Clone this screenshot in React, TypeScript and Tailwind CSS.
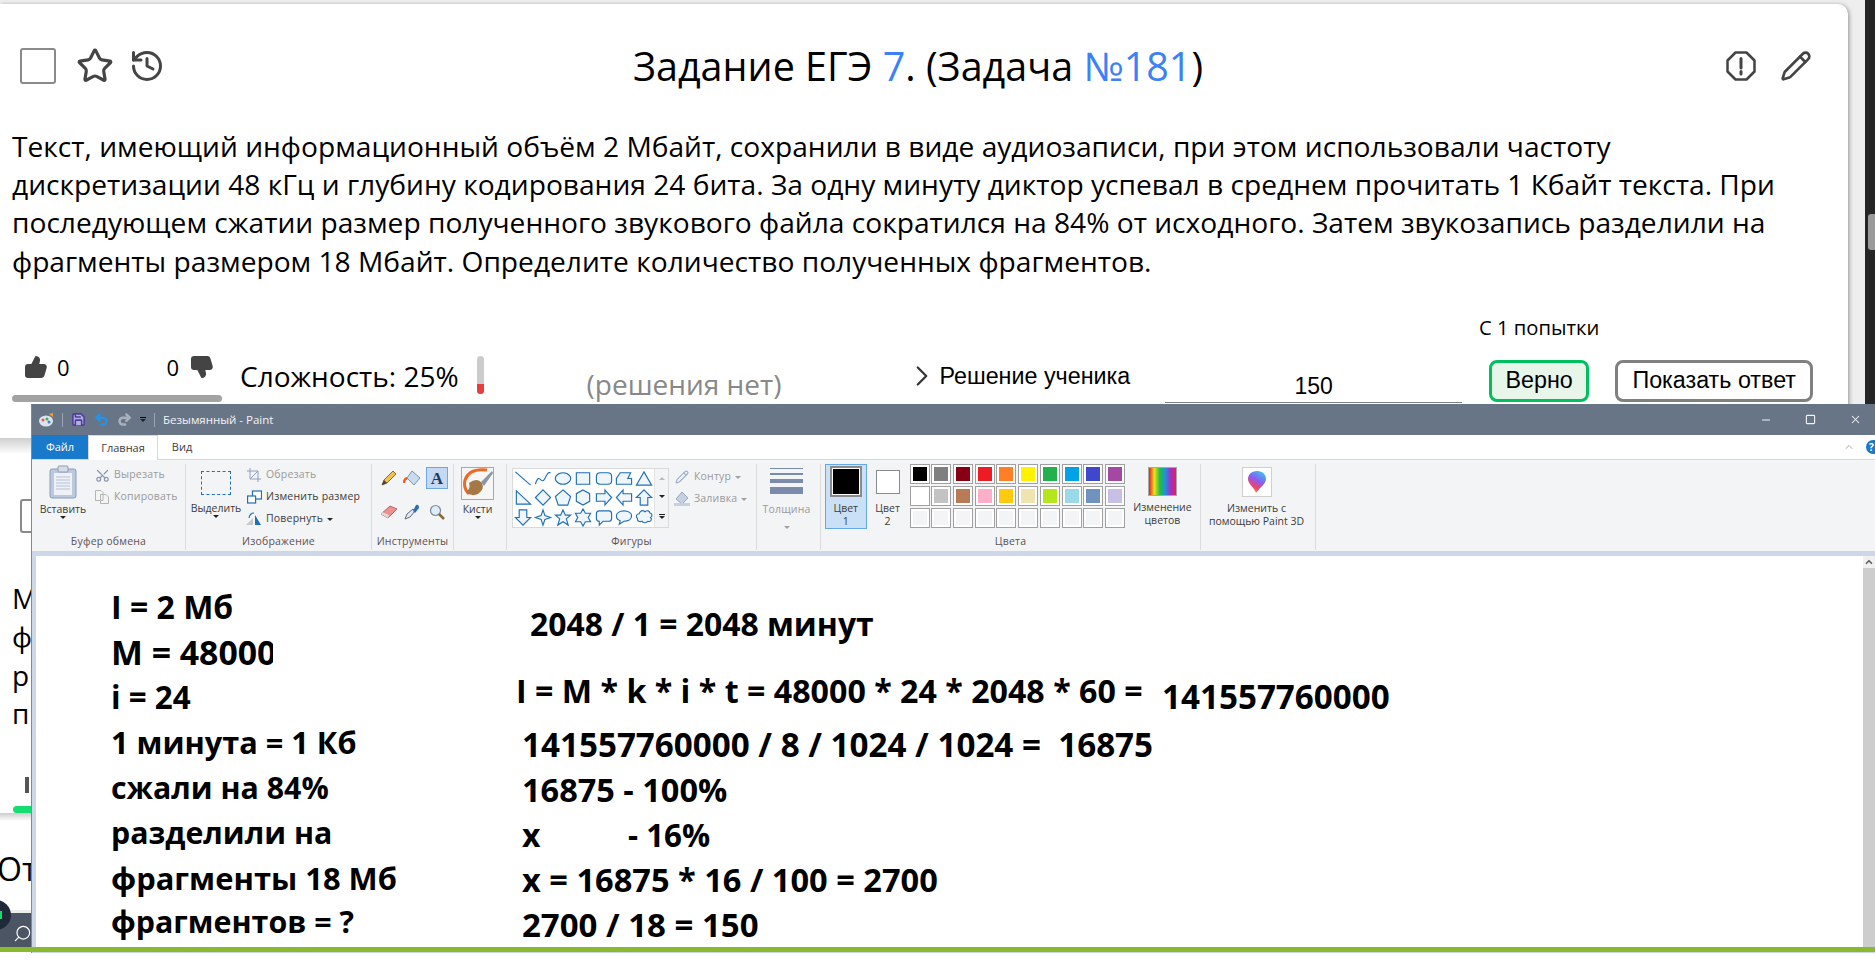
import { Scissors, Star, History, Pencil, ThumbsUp, ThumbsDown, ChevronRight, ChevronUp, Minus, Square, X, Search, Save, Undo2, Redo2 } from 'lucide-react'

const palette = [
  ['#000000', '#7f7f7f', '#880015', '#ed1c24', '#ff7f27', '#fff200', '#22b14c', '#00a2e8', '#3f48cc', '#a349a4'],
  ['#ffffff', '#c3c3c3', '#b97a57', '#ffaec9', '#ffc90e', '#efe4b0', '#b5e61d', '#99d9ea', '#7092be', '#c8bfe7'],
  ['', '', '', '', '', '', '', '', '', ''],
]

const shapes = [
  'M2 3L18 17',
  'M2 16C6 2 8 18 12 10S16 4 18 4',
  'M10 4a8 6 0 1 0 .01 0Z',
  'M3 4H17V16H3Z',
  'M6 4H14Q18 4 18 8V12Q18 16 14 16H6Q2 16 2 12V8Q2 4 6 4Z',
  'M6 4H17L14 10H18V16H2V10Z',
  'M10 3L18 17H2Z',
  'M3 3L18 17H3Z',
  'M10 2L18 10L10 18L2 10Z',
  'M10 2L18 9L15 18H5L2 9Z',
  'M10 2L17 6V14L10 18L3 14V6Z',
  'M2 6H11V2L18 10L11 18V14H2Z',
  'M18 6H9V2L2 10L9 18V14H18Z',
  'M10 2L18 10H14V18H6V10H2Z',
  'M6 2H14V10H18L10 18L2 10H6Z',
  'M10 2L12 8L18 10L12 12L10 18L8 12L2 10L8 8Z',
  'M10 2L12.5 7.5H18L13.5 11.5L15.5 18L10 14.5L4.5 18L6.500 11.5L2 7.5H7.5Z',
  'M10 1L12.500 5.500H18L15.500 10L18 14.500H12.500L10 19L7.500 14.500H2L4.500 10L2 5.500H7.500Z',
  'M5 3H15Q18 3 18 6V11Q18 14 15 14H9L5 18V14Q2 14 2 11V6Q2 3 5 3Z',
  'M10 3C15 3 18 5.500 18 8.500S15 14 10 14L5 17L6 13.500C3.500 12.500 2 10.500 2 8.500C2 5.500 5 3 10 3Z',
  'M6 4C8 2 10 3 11 4C13 2 16 3 16 5C19 6 19 9 17 10C19 12 17 15 14 14C12 16 9 16 8 14C5 15 3 14 3 11C1 9 2 6 5 6C5 5 5.500 4.500 6 4Z',
]

const leftLines = [
  { text: 'I = 2 Мб', top: 587, size: 'text-[32px]' },
  { text: 'M = 48000', top: 632, size: 'text-[33.800px]', clip: true },
  { text: 'i = 24', top: 677, size: 'text-[31.400px]' },
  { text: '1 минута = 1 Кб', top: 722, size: 'text-[30.700px]' },
  { text: 'сжали на 84%', top: 768, size: 'text-[30.300px]' },
  { text: 'разделили на', top: 813, size: 'text-[30.300px]' },
  { text: 'фрагменты 18 Мб', top: 858, size: 'text-[30.900px]' },
  { text: 'фрагментов = ?', top: 902, size: 'text-[30.400px]' },
]

const rightLines = [
  { text: '2048 / 1 = 2048 минут', left: 530, top: 604, size: 'text-[31.900px]' },
  { text: 'I = M * k * i * t = 48000 * 24 * 2048 * 60 =', left: 516, top: 671, size: 'text-[32.200px]' },
  { text: '141557760000', left: 1162, top: 677, size: 'text-[33.200px]' },
  { text: '141557760000 / 8 / 1024 / 1024 =  16875', left: 522, top: 725, size: 'text-[33.200px]' },
  { text: '16875 - 100%', left: 522, top: 770, size: 'text-[32.500px]' },
  { text: 'x', left: 522, top: 815, size: 'text-[32px]' },
  { text: '- 16%', left: 628, top: 815, size: 'text-[31.300px]' },
  { text: 'x = 16875 * 16 / 100 = 2700', left: 522, top: 860, size: 'text-[32.600px]' },
  { text: '2700 / 18 = 150', left: 522, top: 905, size: 'text-[33px]' },
]

function Caret({ gray }: { gray?: boolean }) {
  return <span className={`inline-block h-0 w-0 border-x-[3px] border-t-[3px] border-x-transparent ${gray ? 'border-t-[#a0a0a0]' : 'border-t-[#222]'}`} />
}

function Group({ width, label, children }: { width: string; label: string; children: React.ReactNode }) {
  return (
    <div className={`flex h-[86px] flex-col border-r border-[#dcdcdc] ${width}`}>
      <div className="flex h-[70px] shrink-0">{children}</div>
      <div className="text-center text-[10.500px] leading-[14px] tracking-[0.2px] text-[#5d5257]">{label}</div>
    </div>
  )
}

function SmallAction({ icon, label, dim, caret }: { icon: React.ReactNode; label: string; dim?: boolean; caret?: boolean }) {
  return (
    <div className={`flex h-[22px] items-center gap-[4px] text-[10.500px] tracking-[0.2px] ${dim ? 'text-[#9a9a9a]' : 'text-[#3c3c3c]'}`}>
      <span className="flex w-[16px] justify-center">{icon}</span>
      <span>{label}</span>
      {caret && <Caret gray={dim} />}
    </div>
  )
}

function PaintRibbon() {
  return (
    <div className="flex h-[92px] items-start border-t border-[#d9d9d9] bg-[#f3f4f6] pt-[4px] font-['Open_Sans',sans-serif]">
      <Group width="w-[154px]" label="Буфер обмена">
        <div className="flex w-[62px] flex-col items-center text-[10.500px] text-[#3c3c3c]">
          <svg width="30" height="34" viewBox="0 0 30 34" className="mt-[1px]">
            <rect x="2" y="4" width="26" height="29" rx="2" fill="#bcc8dc" stroke="#8d9cb6" />
            <rect x="6" y="8" width="18" height="22" fill="#eef2f8" />
            <path d="M8 12H22M8 15H22M8 18H22M8 21H22M8 24H22" stroke="#b4c0d4" />
            <rect x="10" y="1" width="10" height="6" rx="1" fill="#d8dce4" stroke="#8d9cb6" />
          </svg>
          <span className="mt-[3px] leading-[14px]">Вставить</span>
          <Caret />
        </div>
        <div className="flex flex-col">
          <SmallAction dim label="Вырезать" icon={<Scissors size={15} className="-rotate-90 text-[#8b97ad]" />} />
          <SmallAction
            dim
            label="Копировать"
            icon={
              <svg width="16" height="16" viewBox="0 0 16 16" fill="#f4f4f4" stroke="#b5b5b5">
                <path d="M1.500 1.500H7L9 3.500V11.500H1.500ZM6.500 5.500H12L14.500 8V14.500H6.500Z" />
              </svg>
            }
          />
        </div>
      </Group>
      <Group width="w-[186px]" label="Изображение">
        <div className="flex w-[60px] flex-col items-center text-[10.500px] text-[#3c3c3c]">
          <div className="mt-[7px] h-[24px] w-[30px] border border-dashed border-[#1f6fb5]" />
          <span className="mt-[6px] leading-[14px]">Выделить</span>
          <Caret />
        </div>
        <div className="flex flex-col">
          <SmallAction
            dim
            label="Обрезать"
            icon={
              <svg width="14" height="14" viewBox="0 0 14 14" fill="none" stroke="#8fa0b8">
                <path d="M3 0V11H14M0 3H11V14M3 11L11 3" />
              </svg>
            }
          />
          <SmallAction
            label="Изменить размер"
            icon={
              <svg width="15" height="14" viewBox="0 0 15 14" fill="#fff" stroke="#1f6fb5" strokeWidth="1.200">
                <rect x="5.500" y="1" width="9" height="8" />
                <rect x="0.600" y="6" width="8" height="7" />
              </svg>
            }
          />
          <SmallAction
            caret
            label="Повернуть"
            icon={
              <svg width="16" height="14" viewBox="0 0 16 14">
                <path d="M0 13L7 6V13Z" fill="#c8c8c8" />
                <path d="M9 3L15 13H9Z" fill="#1f6fb5" />
                <path d="M3 6Q4 1 8 1" fill="none" stroke="#1f6fb5" strokeWidth="1.200" />
              </svg>
            }
          />
        </div>
      </Group>
      <Group width="w-[82px]" label="Инструменты">
        <div className="grid grid-cols-3 grid-rows-2 px-[6px] pt-[3px]">
          <span className="flex h-[22px] w-[22px] items-center justify-center">
            <svg width="16" height="16" viewBox="0 0 16 16">
              <path d="M1 15L3 10L12 1L15 4L6 13Z" fill="#f2c14e" stroke="#8b6a2a" />
              <path d="M1 15L3 10L6 13Z" fill="#444" />
            </svg>
          </span>
          <span className="flex h-[22px] w-[22px] items-center justify-center">
            <svg width="18" height="16" viewBox="0 0 18 16">
              <path d="M9 1L17 8L11 15L4 8Z" fill="#c8dcf0" stroke="#7b94b4" />
              <path d="M4 8Q1 9 1 13" fill="none" stroke="#e8622a" strokeWidth="2.500" />
            </svg>
          </span>
          <span className="ml-[2px] flex h-[22px] w-[22px] items-center justify-center border border-[#6fa8dc] bg-[#c5daf2] font-['Liberation_Serif',serif] text-[17px] font-bold leading-none text-[#1d3a66]">A</span>
          <span className="flex h-[22px] w-[22px] items-center justify-center">
            <svg width="18" height="14" viewBox="0 0 18 14">
              <path d="M1 9L10 1L17 4L8 13Z" fill="#ee8f8f" stroke="#b86a6a" />
              <path d="M1 9L8 13L9 10L2 7Z" fill="#ddd" />
            </svg>
          </span>
          <span className="flex h-[22px] w-[22px] items-center justify-center">
            <svg width="16" height="16" viewBox="0 0 16 16">
              <path d="M1 15L3 10L9 5L11 7L6 13Z" fill="#e6ecf4" stroke="#667" />
              <path d="M9 7L12 1Q15 0 15 4L11 9Z" fill="#2a6fb5" />
            </svg>
          </span>
          <span className="ml-[2px] flex h-[22px] w-[22px] items-center justify-center">
            <svg width="16" height="16" viewBox="0 0 16 16">
              <circle cx="6.500" cy="6.500" r="5" fill="#dcecf8" stroke="#7d8a99" strokeWidth="1.200" />
              <path d="M10 10L15 15" stroke="#8a6a3a" strokeWidth="2.500" />
            </svg>
          </span>
        </div>
      </Group>
      <Group width="w-[53px]" label="">
        <div className="flex w-full flex-col items-center pr-[5px] text-[10.500px] text-[#3c3c3c]">
          <svg width="33" height="33" viewBox="0 0 33 33" className="mt-[3px]">
            <rect x="0.500" y="0.500" width="32" height="32" fill="#f6f6f6" stroke="#a8a8a8" />
            <path d="M26 3Q8 1 4 13Q2 21 8 27" fill="none" stroke="#ea6b24" strokeWidth="3" />
            <path d="M8 16Q16 10 21 16Q24 22 17 27Q10 30 5 25Q10 22 8 16Z" fill="#a57846" />
            <path d="M20 15L31 4L32 6L23 19Z" fill="#8b95a5" />
          </svg>
          <span className="mt-[2px] leading-[14px]">Кисти</span>
          <Caret />
        </div>
      </Group>
      <Group width="w-[250px]" label="Фигуры">
        <div className="ml-[5px] mt-[4px] flex h-[60px] w-[157px] border border-[#dadada] bg-white">
          <div className="grid h-[58px] w-[142px] grid-cols-7 bg-white">
            {shapes.map((d, i) => (
              <svg key={i} width="20" height="19" viewBox="0 0 20 20" stroke="#1f6fb5" strokeWidth="1.200">
                <path d={d} fill={i < 2 ? 'none' : '#eef6fc'} />
              </svg>
            ))}
          </div>
          <div className="flex w-[14px] flex-col items-center justify-around border-l border-[#e4e4e4] bg-[#f3f4f6]">
            <span className="h-0 w-0 border-x-[3px] border-b-[3px] border-x-transparent border-b-[#bbb]" />
            <Caret />
            <span className="flex flex-col items-center gap-[1px]">
              <span className="h-px w-[6px] bg-[#222]" />
              <Caret />
            </span>
          </div>
        </div>
        <div className="ml-[5px] flex flex-col pt-[2px]">
          <SmallAction dim caret label="Контур" icon={<Pencil size={14} className="text-[#9fb0c8]" />} />
          <SmallAction
            dim
            caret
            label="Заливка"
            icon={
              <svg width="16" height="16" viewBox="0 0 16 16">
                <path d="M8 1L14 7L8 13L2 8Z" fill="#c5d0e0" stroke="#9aa8bc" />
                <rect x="0" y="12" width="16" height="3" fill="#c5d0e0" />
              </svg>
            }
          />
        </div>
      </Group>
      <Group width="w-[64px]" label="">
        <div className="flex w-full flex-col items-center pr-[4px] text-[10.500px] text-[#9a9a9a]">
          <div className="mt-[4px] flex w-[33px] flex-col">
            <span className="h-px bg-[#7b8cab]" />
            <span className="mt-[4px] h-[2px] bg-[#7b8cab]" />
            <span className="mt-[4px] h-[4px] bg-[#7b8cab]" />
            <span className="mt-[4px] h-[7px] bg-[#7b8cab]" />
          </div>
          <span className="mt-[8px] leading-[14px] tracking-[0.2px]">Толщина</span>
          <span className="mt-[2px]"><Caret gray /></span>
        </div>
      </Group>
      <Group width="w-[380px]" label="Цвета">
        <div className="ml-[4px] flex h-[65px] w-[42px] flex-col items-center border border-[#66a7e8] bg-[#c9e0f7] pt-[1px] text-[10.500px] leading-[13px] text-[#3c3c3c]">
          <span className="mb-[5px] h-[32px] w-[32px] border-2 border-[#8a8a8a] bg-black outline-1 -outline-offset-3 outline-white" />
          <span className="text-center">Цвет<br />1</span>
        </div>
        <div className="ml-[9px] flex w-[24px] flex-col items-center pt-[6px] text-[10.500px] leading-[13px] text-[#3c3c3c]">
          <span className="mb-[8px] h-[24px] w-[24px] border border-[#8a8a8a] bg-white" />
          <span className="text-center">Цвет<br />2</span>
        </div>
        <div className="ml-[10px] grid h-fit grid-cols-10 gap-[2px]">
          {palette.flat().map((c, i) => (
            <span key={i} className="h-[20px] w-[20px] border border-[#a0a0a0] bg-white p-[2px]">
              <span className="block h-full w-full" style={{ background: c || '#f3f4f6' }} />
            </span>
          ))}
        </div>
        <div className="flex w-[76px] flex-col items-center text-center text-[10.500px] leading-[13px] text-[#3c3c3c]">
          <span className="mb-[5px] mt-[3px] h-[29px] w-[29px] border border-[#a8a8a8] bg-[linear-gradient(90deg,#e02020,#f0e020,#20c040,#2090e0,#a030c0,#e02060)]" />
          Изменение цветов
        </div>
      </Group>
      <Group width="w-[115px]" label="">
        <div className="flex w-full flex-col items-center pr-[3px] text-center text-[10.500px] leading-[13px] text-[#3c3c3c]">
          <span className="mb-[5px] mt-[3px] flex h-[30px] w-[30px] items-center justify-center border border-[#d0d0d0] bg-white">
            <svg width="20" height="24" viewBox="0 0 20 24">
              <defs>
                <linearGradient id="p3d" x1="0.800" y1="0" x2="0.300" y2="1">
                  <stop offset="0" stopColor="#35c8f0" />
                  <stop offset="0.450" stopColor="#8a5cf0" />
                  <stop offset="0.750" stopColor="#f04070" />
                  <stop offset="1" stopColor="#f5a030" />
                </linearGradient>
              </defs>
              <path d="M10 1C16 1 19 5 19 9C19 14 13 17 9 23C7 17 1 14 1 9C1 5 4 1 10 1Z" fill="url(#p3d)" />
            </svg>
          </span>
          <span>Изменить с<br />помощью Paint 3D</span>
        </div>
      </Group>
    </div>
  )
}

function PaintWindow() {
  return (
    <div className="absolute left-[31px] top-[404px] h-[549px] w-[1844px] border-l border-[#7a8aa0] bg-[#cdd7e7]">
      <div className="flex h-[31px] items-center justify-between bg-[#687587] pl-[7px] pr-[13px] font-['Open_Sans',sans-serif] text-[11.500px] text-white">
        <div className="flex items-center gap-[8px]">
          <svg width="15" height="14" viewBox="0 0 15 14">
            <ellipse cx="7" cy="8" rx="7" ry="5.500" fill="#dbe4ee" />
            <circle cx="4" cy="7" r="1.500" fill="#e85a4f" />
            <circle cx="8" cy="6" r="1.500" fill="#4fa85a" />
            <circle cx="10" cy="9" r="1.500" fill="#3b7fd4" />
            <path d="M10 1L14 0V4Z" fill="#e8a23a" />
          </svg>
          <span className="h-[14px] w-px bg-[#9aa5b4]" />
          <Save size={15} strokeWidth={2.500} className="text-[#4c3f98]" fill="#b7aee0" />
          <Undo2 size={15} strokeWidth={4} className="text-[#2a90e0]" />
          <Redo2 size={15} strokeWidth={4} className="text-[#a8b0bb]" />
          <span className="flex flex-col items-center gap-[1px]">
            <span className="h-px w-[6px] bg-black" />
            <Caret />
          </span>
          <span className="h-[14px] w-px bg-[#9aa5b4]" />
          <span className="text-[#f2f4f6]">Безымянный - Paint</span>
        </div>
        <div className="flex items-center gap-[33px] text-[#f2f4f6]">
          <Minus size={12} strokeWidth={2} />
          <Square size={11} strokeWidth={2.400} />
          <X size={13} strokeWidth={1.900} />
        </div>
      </div>
      <div className="flex h-[24px] items-stretch bg-white font-['Open_Sans',sans-serif] text-[11px] leading-[24px] text-[#3c3c3c]">
        <div className="w-[56px] bg-[#1979ca] text-center text-white">Файл</div>
        <div className="h-[25px] w-[70px] border-x border-t border-[#d9d9d9] bg-white text-center">Главная</div>
        <div className="w-[48px] text-center">Вид</div>
        <div className="flex flex-1 items-center justify-end">
          <ChevronUp size={12} className="mr-[11px] text-[#a8a8a8]" />
          <span className="flex h-[14px] w-[9px] items-center overflow-hidden rounded-l-full bg-[#1979ca] pl-[3px] text-[10px] font-bold text-white">?</span>
        </div>
      </div>
      <PaintRibbon />
      <div className="ml-[4px] mt-[5px] flex h-[392px] font-['Open_Sans',sans-serif] font-bold leading-[40px] text-black">
        <div className="relative w-[1827px] bg-white">
          {leftLines.map((line) => (
            <div
              key={line.text}
              className={`absolute left-[75px] whitespace-pre ${line.size} ${line.clip ? 'w-[162px] overflow-hidden' : ''}`}
              style={{ top: line.top - 556 }}
            >
              {line.text}
            </div>
          ))}
          {rightLines.map((line) => (
            <div key={line.text} className={`absolute whitespace-pre ${line.size}`} style={{ left: line.left - 36, top: line.top - 556 }}>
              {line.text}
            </div>
          ))}
        </div>
        <div className="flex w-[12px] flex-col bg-[#cdcdcd]">
          <div className="flex h-[12px] items-center justify-center bg-[#f0f0f0]">
            <ChevronUp size={10} strokeWidth={4} className="text-[#606060]" />
          </div>
        </div>
      </div>
    </div>
  )
}

export default function App() {
  return (
    <div className="relative h-[980px] w-[1875px] overflow-hidden bg-white font-['Open_Sans',sans-serif] text-black">
      <div className="h-[948px] bg-[#eeeeee] pt-[4px]">
        <div className="h-[434px] w-[1848px] rounded-tr-[10px] bg-white pl-[12px] pr-[30px] pt-[40px] shadow-[1px_1px_4px_rgba(0,0,0,0.4)]">
          <div className="mr-[6px] flex h-[44px] items-center">
            <div className="ml-[8px] flex items-center">
              <span className="h-[36px] w-[36px] rounded-[3px] border-2 border-[#8a8a8a] bg-white" />
              <Star size={38} strokeWidth={2} className="ml-[20px] text-[#444]" />
              <History size={36} strokeWidth={2} className="ml-[15px] text-[#444]" />
            </div>
            <h1 className="flex-1 whitespace-nowrap pr-[52px] text-center text-[39.500px] font-normal leading-[44px]">
              Задание ЕГЭ <span className="text-[#3b82f6]">7</span>. (Задача <span className="text-[#3b82f6]">№181</span>)
            </h1>
            <div className="flex items-center gap-[23px] text-[#444]">
              <svg width="32" height="32" viewBox="0 0 32 32" fill="none" stroke="currentColor" strokeWidth="2.500" className="ml-[2px]">
                <path d="M10.500 2.500H21.500L29.500 10.500V21.500L21.500 29.500H10.500L2.500 21.500V10.500Z" strokeLinejoin="round" />
                <path d="M16 8.500V18M16 21.500V24" strokeLinecap="round" strokeWidth="3" />
              </svg>
              <Pencil size={32} strokeWidth={2} />
            </div>
          </div>
          <p className="mt-[39px] w-[1790px] text-[28.150px] leading-[38.200px]">
            Текст, имеющий информационный объём 2 Мбайт, сохранили в виде аудиозаписи, при этом использовали частоту дискретизации 48 кГц и глубину кодирования 24 бита. За одну минуту диктор успевал в среднем прочитать 1 Кбайт текста. При последующем сжатии размер полученного звукового файла сократился на 84% от исходного. Затем звукозапись разделили на фрагменты размером 18 Мбайт. Определите количество полученных фрагментов.
          </p>
          <div className="mt-[48px] flex h-[95px] items-start whitespace-nowrap">
            <div className="mt-[24px] h-[50px] w-[210px] shrink-0">
              <div className="flex items-center justify-between pl-[12px] pr-[8px] text-[22px] leading-[30px]">
                <span className="flex items-center gap-[9px]">
                  <ThumbsUp size={24} className="text-[#444]" fill="#444" />0
                </span>
                <span className="flex items-center gap-[11px]">
                  0<ThumbsDown size={24} className="-scale-x-100 text-[#444]" fill="#444" />
                </span>
              </div>
              <div className="mt-[13px] h-[7px] rounded-full bg-[#a3a3a3]" />
            </div>
            <div className="ml-[18px] mt-[29px] flex shrink-0 items-center">
              <span className="text-[28px] leading-[38px]">Сложность: 25%</span>
              <span className="relative ml-[18px] -mt-[2px] h-[38px] w-[7px] overflow-hidden rounded-full bg-[#cccccc]">
                <span className="absolute bottom-0 left-0 h-[10px] w-full bg-[#e53e3e]" />
              </span>
            </div>
            <span className="ml-[103px] mt-[37px] shrink-0 text-[28px] leading-[38px] text-[#888888]">(решения нет)</span>
            <div className="ml-[124px] mt-[31px] flex shrink-0 items-center font-['Liberation_Sans',sans-serif] text-[23.300px] leading-[30px]">
              <ChevronRight size={34} strokeWidth={1.600} className="text-[#333]" />
              Решение ученика
            </div>
            <div className="ml-[35px] mt-[39px] h-[36px] w-[297px] shrink-0 border-b border-[#808080] text-center font-['Liberation_Sans',sans-serif] text-[23px] leading-[38px]">150</div>
            <div className="ml-[27px] -mt-[14px] flex shrink-0 flex-col">
              <span className="flex w-[100px] justify-center whitespace-nowrap text-[20.200px] leading-[26px]">С 1 попытки</span>
              <div className="mt-[20px] flex gap-[26px] font-['Liberation_Sans',sans-serif] text-[23.300px]">
                <button className="h-[42px] w-[100px] rounded-[8px] border-[3px] border-[#00bf5f] bg-[#e8f5e9]">Верно</button>
                <button className="h-[42px] w-[198px] rounded-[8px] border-[3px] border-[#808080] bg-white">Показать ответ</button>
              </div>
            </div>
          </div>
        </div>
        <div className="h-[472px] w-[31px] overflow-hidden bg-white">
          <div className="h-[16px] bg-gradient-to-b from-[#cfcfcf] to-white" />
          <span className="ml-[20px] mt-[45px] block h-[34px] w-[20px] rounded-[3px] border-2 border-[#8a8a8a]" />
          <div className="mt-[46px] pl-[12px] text-[28px] leading-[38.300px]">
            <p>М</p>
            <p>ф</p>
            <p>р</p>
            <p>п</p>
          </div>
          <div className="ml-[25px] mt-[45px] h-[16px] w-[4px] bg-[#555]" />
          <div className="ml-[13px] mt-[13px] h-[7px] rounded-l-full bg-[#14dc70]" />
          <div className="h-[8px] bg-gradient-to-b from-[#cccccc] to-white" />
        </div>
      </div>
      <div className="absolute left-0 top-[849px] w-[31px] overflow-hidden text-[32px] leading-[40px]">
        <span className="-ml-[3px] block">От</span>
      </div>
      <div className="absolute left-0 top-[913px] flex h-[35px] w-[31px] items-center justify-end overflow-hidden bg-[#4b5563] text-white">
        <Search size={19} strokeWidth={1.500} className="-mr-[1px] mt-[5px] -scale-x-100" />
      </div>
      <div className="absolute -left-[19px] top-[900px] flex h-[30px] w-[30px] items-center justify-end rounded-full bg-[#1f2937] pr-[9px]">
        <span className="h-[8px] w-[2px] bg-[#14dc70]" />
      </div>
      <div className="absolute right-0 top-0 flex h-[404px] w-[10px] justify-end bg-[#252525]">
        <span className="mt-[214px] h-[36px] w-[7px] rounded-l-[3px] bg-[#9a9a9a]" />
      </div>
      <PaintWindow />
      <div className="absolute left-0 top-[947px] h-[5px] w-full bg-[#8ab92b]" />
    </div>
  )
}
